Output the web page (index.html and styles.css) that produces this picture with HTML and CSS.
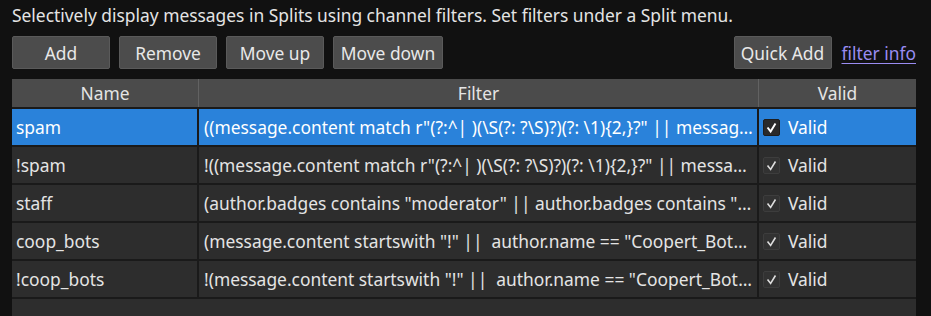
FILE: index.html
```html
<!DOCTYPE html>
<html lang="en">
<head>
	<meta charset="UTF-8">
	<title>Filters</title>
	<link rel="stylesheet" href="styles.css">
</head>
<body>
	<div class="page">
		<p class="intro">Selectively display messages in Splits using channel filters. Set filters under a Split menu.</p>
		<div class="toolbar">
			<button class="btn">Add</button>
			<button class="btn">Remove</button>
			<button class="btn">Move up</button>
			<button class="btn wide">Move down</button>
			<span class="spacer"></span>
			<button class="btn">Quick Add</button>
			<a class="link" href="#">filter info</a>
		</div>
		<div class="filters">
			<div class="head">
				<div class="th">Name</div>
				<div class="th">Filter</div>
				<div class="th">Valid</div>
			</div>
			<div class="row selected">
				<div class="td">spam</div>
				<div class="td">((message.content match r"(?:^| )(\S(?: ?\S)?)(?: \1){2,}?" || message.content match r"(.)\1{5,}"))</div>
				<div class="td valid"><span class="check"><svg viewBox="0 0 17 17"><polyline points="4,8.5 7.5,13 13,4"/></svg></span>Valid</div>
			</div>
			<div class="row">
				<div class="td">!spam</div>
				<div class="td">!((message.content match r"(?:^| )(\S(?: ?\S)?)(?: \1){2,}?" || message.content match r"(.)\1{5,}"))</div>
				<div class="td valid"><span class="check"><svg viewBox="0 0 17 17"><polyline points="4,8.5 7.5,13 13,4"/></svg></span>Valid</div>
			</div>
			<div class="row">
				<div class="td">staff</div>
				<div class="td">(author.badges contains "moderator" || author.badges contains "broadcaster")</div>
				<div class="td valid"><span class="check"><svg viewBox="0 0 17 17"><polyline points="4,8.5 7.5,13 13,4"/></svg></span>Valid</div>
			</div>
			<div class="row">
				<div class="td">coop_bots</div>
				<div class="td">(message.content startswith "!" ||  author.name == "Coopert_Bot" || author.name == "Moobot")</div>
				<div class="td valid"><span class="check"><svg viewBox="0 0 17 17"><polyline points="4,8.5 7.5,13 13,4"/></svg></span>Valid</div>
			</div>
			<div class="row">
				<div class="td">!coop_bots</div>
				<div class="td">!(message.content startswith "!" ||  author.name == "Coopert_Bot" || author.name == "Moobot")</div>
				<div class="td valid"><span class="check"><svg viewBox="0 0 17 17"><polyline points="4,8.5 7.5,13 13,4"/></svg></span>Valid</div>
			</div>
			<div class="empty"></div>
		</div>
	</div>
</body>
</html>
```

FILE: styles.css
```css
*{
	box-sizing: border-box;
}
html, body{
	margin: 0;
	height: 100%;
	background: #111111;
	overflow: hidden;
}
body{
	font-family: "Noto Sans", "Open Sans", sans-serif;
	font-size: 17.4px;
	color: #e4e4e4;
}
.page{
	display: flex;
	flex-direction: column;
	height: 100%;
	padding: 0 15px 0 12px;
}
.intro{
	margin: 0;
	height: 36px;
	padding-top: 3px;
	line-height: 24px;
	white-space: nowrap;
}
.toolbar{
	display: flex;
	align-items: center;
	gap: 9px;
	height: 33px;
	margin-bottom: 10px;
}
.btn{
	font: inherit;
	color: #e8e8e8;
	width: 98px;
	height: 33px;
	padding: 0;
	background: #4c4c4c;
	border: 1px solid #5a5a5a;
	border-radius: 2px;
}
.btn.wide{
	width: 110px;
}
.spacer{
	flex: 1;
}
.link{
	color: #9a8cf2;
	text-decoration: underline;
	text-underline-offset: 3px;
	margin-left: 1px;
}
.filters{
	flex: 1;
	display: flex;
	flex-direction: column;
	gap: 2px;
	background: #1a1a1a;
	width: 904px;
}
.head{
	display: grid;
	grid-template-columns: 186px 560px 158px;
	height: 28px;
	background: #4b4b4b;
}
.th{
	text-align: center;
	line-height: 28px;
	border-left: 1px solid #626262;
}
.th:first-child{
	border-left: none;
}
.row{
	display: grid;
	grid-template-columns: 185px 558px 157px;
	height: 36px;
	gap: 2px;
}
.td{
	background: #2d2d2d;
	line-height: 36px;
	padding-left: 4px;
	white-space: pre;
	overflow: hidden;
	text-overflow: ellipsis;
}
.td:nth-child(2){
	padding-left: 5px;
	padding-right: 3px;
}
.row.selected .td{
	background: #2a82da;
	color: #ffffff;
}
.valid{
	display: flex;
	align-items: center;
	gap: 8px;
}
.check{
	width: 17px;
	height: 17px;
	background: #323232;
	border: 1px solid #3d3d3d;
	border-radius: 2px;
	display: flex;
}
.check svg{
	width: 100%;
	height: 100%;
	fill: none;
	stroke: #dedede;
	stroke-width: 1.8;
}
.row.selected .check{
	background: #2a2a2a;
	border-color: #1e1e1e;
}
.row.selected .check svg{
	stroke: #ffffff;
	stroke-width: 2.2;
}
.empty{
	flex: 1;
	background: #2d2d2d;
}
```
